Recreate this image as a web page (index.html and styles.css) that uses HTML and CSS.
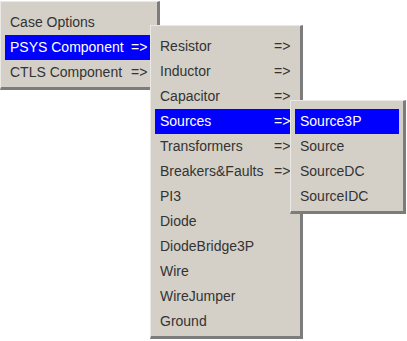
FILE: index.html
```html
<!DOCTYPE html>
<html lang="en">
<head>
    <meta charset="UTF-8">
    <meta name="viewport" content="width=device-width, initial-scale=1.0">
    <title>Component Menu</title>
    <link rel="stylesheet" href="styles.css">
</head>
<body>
    <div class="menu menu-main">
        <div class="item">Case Options</div>
        <div class="item active">PSYS Component <span class="arrow">=&gt;</span></div>
        <div class="item">CTLS Component <span class="arrow">=&gt;</span></div>
    </div>

    <div class="menu menu-psys">
        <div class="item">Resistor <span class="arrow">=&gt;</span></div>
        <div class="item">Inductor <span class="arrow">=&gt;</span></div>
        <div class="item">Capacitor <span class="arrow">=&gt;</span></div>
        <div class="item active">Sources <span class="arrow">=&gt;</span></div>
        <div class="item">Transformers <span class="arrow">=&gt;</span></div>
        <div class="item">Breakers&amp;Faults <span class="arrow">=&gt;</span></div>
        <div class="item">PI3</div>
        <div class="item">Diode</div>
        <div class="item">DiodeBridge3P</div>
        <div class="item">Wire</div>
        <div class="item">WireJumper</div>
        <div class="item">Ground</div>
    </div>

    <div class="menu menu-sources">
        <div class="item active">Source3P</div>
        <div class="item">Source</div>
        <div class="item">SourceDC</div>
        <div class="item">SourceIDC</div>
    </div>
</body>
</html>
```

FILE: styles.css
```css
body {
    margin: 0;
    background: #fff;
    font-family: Arial, "Liberation Sans", sans-serif;
    font-size: 14px;
    color: #333;
}
.menu {
    position: absolute;
    display: flex;
    flex-direction: column;
    box-sizing: border-box;
    background: #d4d0c8;
    border-top: 1px solid #ebe9e5;
    border-left: 1px solid #ebe9e5;
    border-right: 3px solid #7c7c7c;
    border-bottom: 3px solid #7c7c7c;
    padding: 8px 4px 2px 4px;
}
.menu-main {
    left: 0;
    top: 1px;
    width: 160px;
}
.menu-psys {
    left: 150px;
    top: 25px;
    width: 153px;
}
.menu-sources {
    left: 290px;
    top: 100px;
    width: 116px;
}
.item {
    display: flex;
    justify-content: space-between;
    height: 25px;
    line-height: 25px;
    padding-left: 5px;
    white-space: nowrap;
}
.item.active {
    background: #0000ff;
    color: #fff;
}
.arrow {
    width: 22px;
}
```
